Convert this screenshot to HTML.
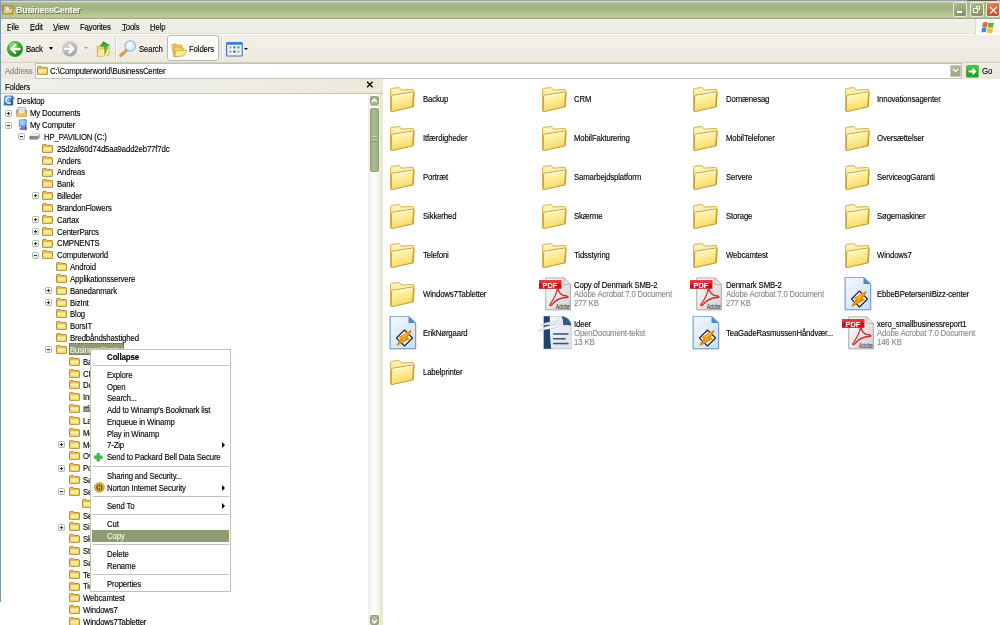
<!DOCTYPE html>
<html><head><meta charset="utf-8"><style>
*{margin:0;padding:0;box-sizing:border-box}
html,body{width:1000px;height:625px;overflow:hidden;background:#fff}
body{position:relative;font-family:"Liberation Sans",sans-serif;font-size:7.8px;letter-spacing:-0.15px;color:#000}
.a{position:absolute}
.t{position:absolute;white-space:nowrap;line-height:12px;height:12px;transform:scaleY(1.06);transform-origin:0 50%;color:#000;will-change:transform;-webkit-text-stroke-width:0.12px}
.g{color:#8a8a8a}
svg{position:absolute;overflow:visible}
#topstrip{left:0;top:0;width:1000px;height:2px;background:linear-gradient(#8aa0aa 0,#8ea2ac 45%,#d5e2ca 70%,#cfdcbf 100%)}
#title{left:0;top:2px;width:1000px;height:17px;background:linear-gradient(#bccaa0 0,#aab98a 10%,#a2b182 30%,#aab989 50%,#b6c493 70%,#bccb9a 85%,#b2bd92 93%,#9aa284 100%)}
#menubar{left:0;top:19px;width:1000px;height:16px;background:linear-gradient(#f3f2ea,#efeee5 20%,#eeede4);border-bottom:1px solid #fbfaf5;box-shadow:inset 0 -1px 0 #e2dfd2}
#toolbar{left:0;top:35px;width:1000px;height:28px;background:linear-gradient(#f1f0e8,#efede3 60%,#ebe9dc);border-bottom:1px solid #cfd3bc}
#addr{left:0;top:63px;width:1000px;height:16px;background:linear-gradient(#efede3,#ebe8da)}
#fhead{left:0;top:79px;width:383px;height:15.2px;background:linear-gradient(90deg,#f0f0ea,#efeee6 50%,#ece9da);border-bottom:1.1px solid #c9c7bc}
#tree{left:0;top:94px;width:368px;height:531px;background:#fff}
#sb{left:368px;top:94px;width:12px;height:531px;background:linear-gradient(90deg,#eeede6,#f9f9f5 30%,#fdfdfa 60%,#f1f0e8)}
#divider{left:380px;top:94px;width:3px;height:531px;background:linear-gradient(90deg,#e6e3d0,#efecdc)}
#lborder{left:0;top:0;width:1.2px;height:601.7px;background:#8196aa}
.exp{position:absolute;width:7px;height:7px;border:1px solid #b4b8aa;border-radius:1.5px;background:linear-gradient(#ffffff,#e2e0d2)}
.exp i{position:absolute;left:1px;top:2px;width:3px;height:1px;background:#2a2a2a}
.exp b{position:absolute;left:2px;top:1px;width:1px;height:3px;background:#2a2a2a}
.menu{left:90px;top:349.2px;width:141.2px;height:242.7px;background:#fff;border:1.1px solid #c3c2b8}
.sep{position:absolute;width:136px;height:1px;background:#c4c3ba}
.mt{font-size:7.8px}
</style></head><body>
<svg width="0" height="0" style="position:absolute"><defs>
<linearGradient id="fgF" x1="0" y1="0" x2="0.3" y2="1"><stop offset="0" stop-color="#fffcd2"/><stop offset="0.45" stop-color="#fdef9c"/><stop offset="1" stop-color="#f6d865"/></linearGradient>
<linearGradient id="fgB" x1="0" y1="0" x2="0" y2="1"><stop offset="0" stop-color="#fff6c4"/><stop offset="1" stop-color="#f2d26a"/></linearGradient>
<linearGradient id="grn" x1="0" y1="0" x2="0.6" y2="1"><stop offset="0" stop-color="#8fe06a"/><stop offset="0.5" stop-color="#3fb52f"/><stop offset="1" stop-color="#1a8a1a"/></linearGradient>
<linearGradient id="gry" x1="0" y1="0" x2="0.6" y2="1"><stop offset="0" stop-color="#dcdcdc"/><stop offset="1" stop-color="#a5a5a5"/></linearGradient>
<linearGradient id="pg" x1="0" y1="0" x2="1" y2="1"><stop offset="0" stop-color="#ffffff"/><stop offset="1" stop-color="#cfcfcf"/></linearGradient>
<linearGradient id="wpg" x1="0" y1="0" x2="1" y2="1"><stop offset="0" stop-color="#f4f9ff"/><stop offset="1" stop-color="#c6def7"/></linearGradient>
<symbol id="bigfolder" viewBox="0 0 35 35">
<path d="M6.4 6.4 L13.6 5.6 Q14.4 5.5 14.9 6.2 L16.2 8.1 L27.8 7.5 Q28.7 7.5 28.7 8.4 L28.4 24.8 L6.2 29.4 Q5.6 29.4 5.6 28.6 L5.6 7.3 Q5.6 6.5 6.4 6.4 Z" fill="url(#fgB)" stroke="#d1a536" stroke-width="0.9"/>
<path d="M7.4 13.3 L28.4 9.9 Q29.3 9.8 29.2 10.6 L28.3 24 Q28.2 24.7 27.5 24.8 L7 29.6 Q6.2 29.8 6.2 29 L6.7 14.1 Q6.7 13.4 7.4 13.3 Z" fill="url(#fgF)" stroke="#cfa030" stroke-width="1"/>
<path d="M7.8 14.4 L28.2 11.1" stroke="#fffff0" stroke-width="0.9" fill="none"/>
<path d="M28.5 10.6 L27.7 24.2" stroke="#c89422" stroke-width="0.9" fill="none"/>
</symbol>
<linearGradient id="sfF" x1="0" y1="0" x2="0" y2="1"><stop offset="0" stop-color="#fff8c0"/><stop offset="1" stop-color="#f8dc68"/></linearGradient>
<symbol id="smfolder" viewBox="0 0 11 9">
<path d="M1.3 0.5 H4.2 L5.2 1.5 H9.7 Q10.5 1.5 10.5 2.3 V7.9 Q10.5 8.6 9.7 8.6 H1.3 Q0.5 8.6 0.5 7.9 V1.3 Q0.5 0.5 1.3 0.5 Z" fill="#e6bd4e" stroke="#a9842c" stroke-width="0.85"/>
<rect x="1.5" y="3.5" width="8.2" height="4.3" rx="0.4" fill="url(#sfF)"/>
</symbol>
<symbol id="pdf" viewBox="0 0 35 35">
<path d="M8.7 0.9 L27 0.9 L33.4 7.5 L33.4 32.9 L8.7 32.9 Z" fill="url(#pg)" stroke="#9c9c9c" stroke-width="0.8"/>
<path d="M27 0.9 L27 7.5 L33.4 7.5 Z" fill="#e8e8e8" stroke="#9c9c9c" stroke-width="0.6"/>
<rect x="2" y="3.1" width="22.4" height="8.7" fill="#cc0c14"/>
<rect x="2" y="3.1" width="22.4" height="3.5" fill="#f05858" opacity="0.55"/>
<text x="5.6" y="10.6" font-family="Liberation Sans" font-size="8" font-weight="bold" fill="#fff" textLength="14.5" lengthAdjust="spacingAndGlyphs">PDF</text>
<path d="M20.5 11.5 C19.8 15.5 17.5 21 13 27.5 C12.2 28.8 14 29 15 27.6 C18 23.5 22.5 20.8 29.8 20.5 C31.5 20.4 31.4 19.3 29.3 19 C24 18.5 21.8 16.3 21 11.8" fill="none" stroke="#d32a2a" stroke-width="1.3"/>
<text x="18.8" y="32.3" font-family="Liberation Sans" font-size="6.8" fill="#2e2e2e" textLength="14" lengthAdjust="spacingAndGlyphs">Adobe</text>
</symbol>
<symbol id="wa" viewBox="0 0 35 35">
<path d="M5.1 0.2 L23.5 0.2 L30.7 7 L30.7 32.8 L5.1 32.8 Z" fill="url(#wpg)" stroke="#5d8ec6" stroke-width="1"/>
<path d="M23.5 0.2 L23.5 7 L30.7 7 Z" fill="#4a8ad8"/>
<path d="M11.5 22 L19.5 14 L27.5 22 L19.5 30 Z" fill="#fff" stroke="#222" stroke-width="1.1" stroke-linejoin="round"/>
<path d="M12.4 28.8 L17.2 21.6 L14.6 21.4 L25.8 15 L21.2 22.2 L24 22.5 Z" fill="#f4a21c" stroke="#e08a10" stroke-width="1.6" stroke-linejoin="round"/><path d="M15.5 21.8 L23.5 17" stroke="#fcd070" stroke-width="0.8"/>
</symbol>
<symbol id="odt" viewBox="0 0 35 35">
<linearGradient id="odpg" x1="0" y1="0" x2="1" y2="1"><stop offset="0" stop-color="#f6f7f9"/><stop offset="1" stop-color="#dde2e8"/></linearGradient>
<path d="M6.8 0.2 L24.5 0.2 Q33 1 34.3 9.5 L34.3 32.8 L6.8 32.8 Z" fill="url(#odpg)" stroke="#a8b0ba" stroke-width="0.6"/>
<path d="M6.8 0.2 L12.8 0.2 Q12.6 20 14.2 32.8 L6.8 32.8 Z" fill="#1f4470"/>
<path d="M24.5 0.2 Q33 1 34.3 9.5 Q30 8.6 26.2 9.2 Q26.6 4 24.5 0.2 Z" fill="#2f5b8c"/>
<path d="M1.5 15 Q8 9.5 16 9.2 Q21 9 24.8 5.5 Q22 12 15 12.5 Q8 13 1.5 15 Z" fill="#f4f6f8" stroke="#b8c2cc" stroke-width="0.5"/>
<path d="M3.5 9.5 Q9 5.5 15 6 Q19 6.2 22 3.5 Q20 8 14.5 8.5 Q9 8.8 3.5 9.5 Z" fill="#eef1f4" stroke="#b8c2cc" stroke-width="0.5"/>
<rect x="16.1" y="17.2" width="15.4" height="1.5" fill="#2e5580"/>
<rect x="16.1" y="22" width="12.4" height="1.5" fill="#2e5580"/>
<rect x="16.1" y="26.8" width="15.4" height="1.5" fill="#2e5580"/>
</symbol>
</defs></svg>
<div class="a" id="topstrip"></div><div class="a" id="title"></div><div class="a" id="menubar"></div><div class="a" id="toolbar"></div><div class="a" id="addr"></div>
<div class="a" id="fhead"></div><div class="a" id="tree"></div><div class="a" id="sb"></div><div class="a" id="divider"></div>
<div class="a" style="left:967px;top:0;width:30px;height:0.9px;background:#6b5a50"></div>
<svg style="left:2px;top:4px" width="12" height="11" viewBox="0 0 12 11">
<path d="M0.8 2 L4.5 1.2 L5.6 2.3 L10.5 2.2 L10.5 9.8 L1 9.8 Z" fill="#e7b840" stroke="#9b7420" stroke-width="0.8"/>
<path d="M1.5 4.5 L11.2 4.2 L10.3 9.6 L1.2 9.8 Z" fill="#f6d36a" stroke="#a37a22" stroke-width="0.7"/>
<circle cx="5.2" cy="5" r="2.4" fill="#cfeaff" stroke="#7fb0d8" stroke-width="0.5"/>
</svg>
<div class="t" style="left:16px;top:3.5px;font-weight:bold;font-size:9px;letter-spacing:-0.3px;color:#f5f6ec;text-shadow:1px 1px 0 #5d6b44;line-height:12px">BusinessCenter</div>
<div class="a" style="left:953.4px;top:2.4px;width:14px;height:14.4px;border-radius:2.5px;border:0.9px solid #e8eedc;background:linear-gradient(160deg,#b2bf96,#98a77c 45%,#7f8f64)"><div class="a" style="left:2.8px;top:7.8px;width:5px;height:1.9px;background:#fff"></div></div>
<div class="a" style="left:969.5px;top:2.4px;width:14px;height:14.4px;border-radius:2.5px;border:0.9px solid #e8eedc;background:linear-gradient(160deg,#b2bf96,#98a77c 45%,#7f8f64)"><div class="a" style="left:5px;top:2.2px;width:4.6px;height:4.6px;border:0.9px solid #f4f4ea;border-top-width:1.4px"></div><div class="a" style="left:2.7px;top:4.6px;width:5px;height:4.8px;border:0.9px solid #fff;border-top-width:1.4px;background:#8e9d74"></div></div>
<div class="a" style="left:985.8px;top:2.4px;width:14px;height:14.4px;border-radius:2.5px;border:0.9px solid #e8eedc;background:linear-gradient(160deg,#e88a64,#d4643a 45%,#bf4c24)"><svg style="left:2.4px;top:2.6px" width="9" height="9" viewBox="0 0 9 9"><path d="M1 1 L7.8 7.6 M7.8 1 L1 7.6" stroke="#fff" stroke-width="1.3"/></svg></div>
<div class="t " style="left:7.2px;top:21.5px;">File</div>
<div class="a" style="left:7.2px;top:30.3px;width:4px;height:0.8px;background:#555"></div>
<div class="t " style="left:29.7px;top:21.5px;">Edit</div>
<div class="a" style="left:29.7px;top:30.3px;width:4px;height:0.8px;background:#555"></div>
<div class="t " style="left:53.0px;top:21.5px;">View</div>
<div class="a" style="left:53.0px;top:30.3px;width:4px;height:0.8px;background:#555"></div>
<div class="t " style="left:79.6px;top:21.5px;">Favorites</div>
<div class="a" style="left:86.6px;top:30.3px;width:4px;height:0.8px;background:#555"></div>
<div class="t " style="left:122.0px;top:21.5px;">Tools</div>
<div class="a" style="left:122.0px;top:30.3px;width:4px;height:0.8px;background:#555"></div>
<div class="t " style="left:150.3px;top:21.5px;">Help</div>
<div class="a" style="left:150.3px;top:30.3px;width:4px;height:0.8px;background:#555"></div>
<div class="a" style="left:974.5px;top:19px;width:25.5px;height:16px;background:#fff;border-left:1px solid #dcd9c8"></div>
<svg style="left:981px;top:20.5px" width="14" height="13" viewBox="0 0 14 13">
<path d="M2 1.8 Q4 0.6 6.6 1.4 L5.8 6 Q3.4 5.2 1.2 6.3 Z" fill="#e8602a"/>
<path d="M7.3 1.6 Q10 2.6 13 1.4 L12.2 6.3 Q9.4 7.3 6.6 6.2 Z" fill="#5cb832"/>
<path d="M1.1 7 Q3.3 5.9 5.7 6.7 L4.9 11.3 Q2.6 10.5 0.3 11.6 Z" fill="#3a8ee0"/>
<path d="M6.5 6.9 Q9.3 8 12.1 7 L11.3 11.8 Q8.5 12.8 5.7 11.6 Z" fill="#f4c020"/>
</svg>
<svg style="left:7px;top:41px" width="16" height="16" viewBox="0 0 16 16">
<circle cx="8" cy="8" r="7.8" fill="url(#grn)"/>
<circle cx="8" cy="8" r="7.5" fill="none" stroke="#24922a" stroke-width="0.6"/><ellipse cx="6.5" cy="4.5" rx="4.5" ry="3" fill="#b8f0a0" opacity="0.35"/>
<path d="M12.6 8 L4.6 8 M8.2 4.2 L4.2 8 L8.2 11.8" stroke="#fff" stroke-width="2.3" fill="none" stroke-linecap="round" stroke-linejoin="round"/>
</svg>
<div class="t " style="left:25.8px;top:44.0px;">Back</div>
<div class="a" style="left:48.5px;top:47.2px;width:0;height:0;border-top:3px solid #000;border-left:2px solid transparent;border-right:2px solid transparent"></div>
<svg style="left:62px;top:41.1px" width="16" height="16" viewBox="0 0 16 16">
<circle cx="7.7" cy="7.8" r="7.7" fill="url(#gry)"/>
<path d="M3 7.8 L11 7.8 M7.4 4 L11.4 7.8 L7.4 11.6" stroke="#fff" stroke-width="2.3" fill="none" stroke-linecap="round" stroke-linejoin="round"/>
</svg>
<div class="a" style="left:84.2px;top:47.1px;width:0;height:0;border-top:2px solid #999;border-left:2px solid transparent;border-right:2px solid transparent"></div>
<svg style="left:95.5px;top:40.5px" width="15" height="17" viewBox="0 0 15 17">
<linearGradient id="upg" x1="0" y1="0" x2="0.3" y2="1"><stop offset="0" stop-color="#1a9020"/><stop offset="1" stop-color="#7ad85a"/></linearGradient>
<path d="M1 5.6 L4.4 4.4 L6 5.5 L12.4 5.4 Q13.8 5.4 13.7 6.8 L13 13.8 L1.5 16 Z" fill="#f1d16a" stroke="#cfa640" stroke-width="0.7"/>
<path d="M2.3 8.2 L13.9 7.4 L12.2 14.3 L1.6 16.1 Z" fill="#fdec98" stroke="#d7b04a" stroke-width="0.5"/>
<path d="M7.4 0.6 L13.5 4.3 L10.9 4.7 C11.3 8 10.6 11.2 8.5 13.4 C9 10.6 8.8 7.6 8 5 L4.3 5.2 Z" fill="url(#upg)" stroke="#148018" stroke-width="0.4"/>
</svg>
<div class="a" style="left:114.5px;top:37px;width:1px;height:23.5px;background:#d3d0c0;box-shadow:1px 0 0 #fff"></div>
<svg style="left:119px;top:40px" width="18" height="17" viewBox="0 0 18 17">
<path d="M7.5 10.2 L1.8 15.6" stroke="#c0702a" stroke-width="2.8" stroke-linecap="round"/>
<path d="M7.5 10.2 L1.8 15.6" stroke="#f5a65a" stroke-width="1.4" stroke-linecap="round"/>
<circle cx="11.2" cy="6" r="5.2" fill="#d8f0ff" stroke="#8cb4d4" stroke-width="1.1"/>
<circle cx="10.3" cy="5" r="2.4" fill="#f4fbff"/>
</svg>
<div class="t " style="left:138.9px;top:44.0px;">Search</div>
<div class="a" style="left:167.4px;top:35.4px;width:51.3px;height:26.1px;background:#fbfbf9;border:1px solid #b3bac4;border-radius:3px"></div>
<svg style="left:170.5px;top:42px" width="17" height="16" viewBox="0 0 17 16">
<path d="M1 2.5 L5 1.8 L6.2 3 L11 3.2 L11.5 12 L2.5 14.8 Z" fill="#eec552" stroke="#c69a30" stroke-width="0.6"/>
<path d="M3 5.5 L7 4.8 L8 5.8 L12.5 6 L13 13 L4 15 Z" fill="#f5d568" stroke="#c69a30" stroke-width="0.6"/>
<path d="M4.5 9 L16 8 L13.2 13.8 L4 15 Z" fill="#fbeb92" stroke="#c49a2e" stroke-width="0.6"/>
</svg>
<div class="t " style="left:189.4px;top:44.0px;">Folders</div>
<div class="a" style="left:220.5px;top:37px;width:1px;height:23.5px;background:#d3d0c0;box-shadow:1px 0 0 #fff"></div>
<svg style="left:225.5px;top:42px" width="17" height="15" viewBox="0 0 17 15">
<rect x="0.6" y="0.6" width="15.6" height="13.4" rx="1" fill="#eef5ff" stroke="#3d6fc8" stroke-width="1.1"/>
<rect x="0.6" y="0.6" width="15.6" height="2.2" fill="#4a7fd8"/>
<rect x="3.4" y="4.4" width="2" height="2" fill="#a898d0"/><rect x="7.4" y="4.4" width="2" height="2" fill="#2a6ad8"/><rect x="11.4" y="4.4" width="2" height="2" fill="#20a030"/>
<rect x="3.4" y="8.6" width="2" height="2" fill="#e87850"/><rect x="7.4" y="8.6" width="2" height="2" fill="#183a8a"/><rect x="11.4" y="8.6" width="2" height="2" fill="#c8a040"/>
</svg>
<div class="a" style="left:244.3px;top:48px;width:0;height:0;border-top:2.5px solid #000;border-left:2px solid transparent;border-right:2px solid transparent"></div>
<div class="t " style="left:4.9px;top:65.8px;color:#8c8a80">Address</div>
<div class="a" style="left:35px;top:63px;width:927px;height:16px;background:#fff;border:1px solid #bcc6aa"></div>
<svg style="left:36.8px;top:66px" width="11" height="9"><use href="#smfolder"/></svg>
<div class="t " style="left:50.0px;top:65.8px;">C:\Computerworld\BusinessCenter</div>
<div class="a" style="left:950px;top:64.8px;width:10.5px;height:12.4px;background:linear-gradient(#b0bb98,#98a582);border:1px solid #c7cdb8"></div>
<svg style="left:952px;top:68px" width="7" height="5" viewBox="0 0 7 5"><path d="M1 1 L3.5 3.6 L6 1" stroke="#fff" stroke-width="1.3" fill="none"/></svg>
<svg style="left:966px;top:64.8px" width="13" height="13" viewBox="0 0 13 13">
<rect x="0.2" y="0.2" width="12.4" height="12.4" rx="1.5" fill="#22a22a"/>
<rect x="0.2" y="0.2" width="12.4" height="5" rx="1.5" fill="#5ccc52" opacity="0.6"/>
<path d="M2.5 5.4 L6.5 5.4 L6.5 2.6 L10.6 6.4 L6.5 10.2 L6.5 7.4 L2.5 7.4 Z" fill="#fff"/>
</svg>
<div class="t " style="left:981.6px;top:66.0px;">Go</div>
<div class="t " style="left:4.8px;top:82.0px;">Folders</div>
<svg style="left:366.3px;top:80.6px" width="8" height="7" viewBox="0 0 8 7"><path d="M1 0.8 L6.6 6.2 M6.6 0.8 L1 6.2" stroke="#000" stroke-width="1.3"/></svg>
<svg style="left:2.5px;top:95.3px" width="12" height="11" viewBox="0 0 12 11">
<linearGradient id="dkg" x1="0" y1="0" x2="1" y2="1"><stop offset="0" stop-color="#6fb0f0"/><stop offset="0.5" stop-color="#3a7cd0"/><stop offset="1" stop-color="#1c4c9c"/></linearGradient>
<path d="M1.2 1.4 Q1.2 0.4 2.2 0.4 L9.4 0.6 Q10.3 0.6 10.3 1.6 L10.2 9.2 Q10.2 10.4 9 10.4 L1.8 10.6 Q0.6 10.6 0.6 9.4 Z" fill="url(#dkg)"/>
<path d="M8 3 C6.5 1.6 3.2 2 3 5.2 C2.9 8.2 6 8.8 7.8 7.6" fill="none" stroke="#e8f4ff" stroke-width="1.6"/>
<circle cx="5.6" cy="5.4" r="1.3" fill="#8cc4f4"/>
<circle cx="10.8" cy="3.2" r="0.9" fill="#d84830"/>
</svg>
<div class="t " style="left:16.6px;top:96.4px;">Desktop</div>
<div class="exp" style="left:4.7px;top:109.6px"><i></i><b></b></div>
<svg style="left:16px;top:107.2px" width="11" height="10" viewBox="0 0 11 10">
<rect x="0.4" y="2.6" width="10.2" height="7" rx="1" fill="#d9a840" stroke="#a98030" stroke-width="0.6"/>
<rect x="2.2" y="0.4" width="6.8" height="7" fill="#eef6ff" stroke="#6c9ed4" stroke-width="0.6"/>
<rect x="3.2" y="2.2" width="4.8" height="0.6" fill="#9cc0e8"/><rect x="3.2" y="3.8" width="4.8" height="0.6" fill="#9cc0e8"/>
<rect x="0.6" y="5.8" width="9.8" height="3.6" fill="#f2c45a"/>
</svg>
<div class="t " style="left:30.0px;top:108.2px;">My Documents</div>
<div class="exp" style="left:4.7px;top:121.5px"><i></i></div>
<svg style="left:17.5px;top:119px" width="10" height="12" viewBox="0 0 10 12">
<linearGradient id="cmg" x1="0" y1="0" x2="1" y2="1"><stop offset="0" stop-color="#9ad4ff"/><stop offset="1" stop-color="#2a78d8"/></linearGradient>
<path d="M1.6 1 L7.6 0.4 Q8.4 0.4 8.4 1.2 L8.2 7 L2 7.8 Q1.2 7.8 1.2 7 L1.2 1.6 Q1.2 1 1.6 1 Z" fill="url(#cmg)" stroke="#2f68b8" stroke-width="0.5"/>
<path d="M2.2 1.8 L7.4 1.3 L7.3 6.2 L2.2 6.8 Z" fill="#bfe6ff" opacity="0.6"/>
<path d="M2.2 10.8 Q1.4 9.6 3 8.6 L7.6 8 Q8.8 9 7.6 10.6 Z" fill="#7a6cc8" stroke="#4a3c98" stroke-width="0.4"/>
<path d="M6.6 7.4 L8.8 7.2 L8.8 11 L6.8 11.2 Z" fill="#5a58b8"/>
</svg>
<div class="t " style="left:30.0px;top:120.1px;">My Computer</div>
<div class="exp" style="left:18.2px;top:133.3px"><i></i></div>
<svg style="left:29px;top:132.8px" width="12" height="7" viewBox="0 0 12 7">
<path d="M0.5 3 L3 0.6 L11.3 0.6 L11.3 4 L8.8 6.4 L0.5 6.4 Z" fill="#a8a8a8"/>
<path d="M0.5 3 L3 0.6 L11.3 0.6 L8.8 3 Z" fill="#eeeeee"/>
<path d="M0.5 3 L8.8 3 L8.8 6.4 L0.5 6.4 Z" fill="#8a8a8a"/>
<rect x="6.4" y="4.2" width="1.6" height="0.9" fill="#50d040"/>
</svg>
<div class="t " style="left:43.5px;top:131.9px;">HP_PAVILION (C:)</div>
<svg style="left:42.4px;top:143.8px" width="11" height="9"><use href="#smfolder"/></svg>
<div class="t " style="left:56.8px;top:143.7px;">25d2af60d74d5aa9add2eb77f7dc</div>
<svg style="left:42.4px;top:155.7px" width="11" height="9"><use href="#smfolder"/></svg>
<div class="t " style="left:56.8px;top:155.6px;">Anders</div>
<svg style="left:42.4px;top:167.5px" width="11" height="9"><use href="#smfolder"/></svg>
<div class="t " style="left:56.8px;top:167.4px;">Andreas</div>
<svg style="left:42.4px;top:179.3px" width="11" height="9"><use href="#smfolder"/></svg>
<div class="t " style="left:56.8px;top:179.2px;">Bank</div>
<div class="exp" style="left:31.5px;top:192.4px"><i></i><b></b></div>
<svg style="left:42.4px;top:191.1px" width="11" height="9"><use href="#smfolder"/></svg>
<div class="t " style="left:56.8px;top:191.0px;">Billeder</div>
<svg style="left:42.4px;top:203.0px" width="11" height="9"><use href="#smfolder"/></svg>
<div class="t " style="left:56.8px;top:202.9px;">BrandonFlowers</div>
<div class="exp" style="left:31.5px;top:216.1px"><i></i><b></b></div>
<svg style="left:42.4px;top:214.8px" width="11" height="9"><use href="#smfolder"/></svg>
<div class="t " style="left:56.8px;top:214.7px;">Cartax</div>
<div class="exp" style="left:31.5px;top:227.9px"><i></i><b></b></div>
<svg style="left:42.4px;top:226.6px" width="11" height="9"><use href="#smfolder"/></svg>
<div class="t " style="left:56.8px;top:226.5px;">CenterParcs</div>
<div class="exp" style="left:31.5px;top:239.8px"><i></i><b></b></div>
<svg style="left:42.4px;top:238.5px" width="11" height="9"><use href="#smfolder"/></svg>
<div class="t " style="left:56.8px;top:238.4px;">CMPNENTS</div>
<div class="exp" style="left:31.5px;top:251.6px"><i></i></div>
<svg style="left:42.4px;top:250.3px" width="11" height="9"><use href="#smfolder"/></svg>
<div class="t " style="left:56.8px;top:250.2px;">Computerworld</div>
<svg style="left:55.6px;top:262.1px" width="11" height="9"><use href="#smfolder"/></svg>
<div class="t " style="left:70.0px;top:262.0px;">Android</div>
<svg style="left:55.6px;top:274.0px" width="11" height="9"><use href="#smfolder"/></svg>
<div class="t " style="left:70.0px;top:273.9px;">Applikationsservere</div>
<div class="exp" style="left:44.7px;top:287.1px"><i></i><b></b></div>
<svg style="left:55.6px;top:285.8px" width="11" height="9"><use href="#smfolder"/></svg>
<div class="t " style="left:70.0px;top:285.7px;">Banedanmark</div>
<div class="exp" style="left:44.7px;top:298.9px"><i></i><b></b></div>
<svg style="left:55.6px;top:297.6px" width="11" height="9"><use href="#smfolder"/></svg>
<div class="t " style="left:70.0px;top:297.5px;">BizInt</div>
<svg style="left:55.6px;top:309.4px" width="11" height="9"><use href="#smfolder"/></svg>
<div class="t " style="left:70.0px;top:309.3px;">Blog</div>
<svg style="left:55.6px;top:321.3px" width="11" height="9"><use href="#smfolder"/></svg>
<div class="t " style="left:70.0px;top:321.2px;">BorsIT</div>
<svg style="left:55.6px;top:333.1px" width="11" height="9"><use href="#smfolder"/></svg>
<div class="t " style="left:70.0px;top:333.0px;">Bredbåndshastighed</div>
<div class="exp" style="left:44.7px;top:346.2px"><i></i></div>
<svg style="left:55.6px;top:344.9px" width="11" height="9"><use href="#smfolder"/></svg>
<div class="a" style="left:68.7px;top:343.4px;width:55.7px;height:11.6px;background:#8f9c73;border:1px dotted #5f6a48"></div>
<div class="t " style="left:70.0px;top:344.8px;color:#eef0e4">BusinessCenter</div>
<svg style="left:68.6px;top:356.8px" width="11" height="9"><use href="#smfolder"/></svg>
<div class="t " style="left:83.0px;top:356.7px;">Backup</div>
<svg style="left:68.6px;top:368.6px" width="11" height="9"><use href="#smfolder"/></svg>
<div class="t " style="left:83.0px;top:368.5px;">CRM</div>
<svg style="left:68.6px;top:380.4px" width="11" height="9"><use href="#smfolder"/></svg>
<div class="t " style="left:83.0px;top:380.3px;">Domænesag</div>
<svg style="left:68.6px;top:392.2px" width="11" height="9"><use href="#smfolder"/></svg>
<div class="t " style="left:83.0px;top:392.1px;">Innovationsagenter</div>
<svg style="left:68.6px;top:404.1px" width="11" height="9"><use href="#smfolder"/></svg>
<div class="t " style="left:83.0px;top:404.0px;">Itfærdigheder</div>
<svg style="left:68.6px;top:415.9px" width="11" height="9"><use href="#smfolder"/></svg>
<div class="t " style="left:83.0px;top:415.8px;">Labelprinter</div>
<svg style="left:68.6px;top:427.7px" width="11" height="9"><use href="#smfolder"/></svg>
<div class="t " style="left:83.0px;top:427.6px;">MobilFakturering</div>
<div class="exp" style="left:57.7px;top:440.9px"><i></i><b></b></div>
<svg style="left:68.6px;top:439.6px" width="11" height="9"><use href="#smfolder"/></svg>
<div class="t " style="left:83.0px;top:439.5px;">MobilTelefoner</div>
<svg style="left:68.6px;top:451.4px" width="11" height="9"><use href="#smfolder"/></svg>
<div class="t " style="left:83.0px;top:451.3px;">Oversættelser</div>
<div class="exp" style="left:57.7px;top:464.5px"><i></i><b></b></div>
<svg style="left:68.6px;top:463.2px" width="11" height="9"><use href="#smfolder"/></svg>
<div class="t " style="left:83.0px;top:463.1px;">Portræt</div>
<svg style="left:68.6px;top:475.1px" width="11" height="9"><use href="#smfolder"/></svg>
<div class="t " style="left:83.0px;top:475.0px;">Samarbejdsplatform</div>
<div class="exp" style="left:57.7px;top:488.2px"><i></i></div>
<svg style="left:68.6px;top:486.9px" width="11" height="9"><use href="#smfolder"/></svg>
<div class="t " style="left:83.0px;top:486.8px;">Servere</div>
<svg style="left:82.0px;top:498.7px" width="11" height="9"><use href="#smfolder"/></svg>
<svg style="left:68.6px;top:510.6px" width="11" height="9"><use href="#smfolder"/></svg>
<div class="t " style="left:83.0px;top:510.5px;">ServiceogGaranti</div>
<div class="exp" style="left:57.7px;top:523.7px"><i></i><b></b></div>
<svg style="left:68.6px;top:522.4px" width="11" height="9"><use href="#smfolder"/></svg>
<div class="t " style="left:83.0px;top:522.3px;">Sikkerhed</div>
<svg style="left:68.6px;top:534.2px" width="11" height="9"><use href="#smfolder"/></svg>
<div class="t " style="left:83.0px;top:534.1px;">Skærme</div>
<svg style="left:68.6px;top:546.0px" width="11" height="9"><use href="#smfolder"/></svg>
<div class="t " style="left:83.0px;top:545.9px;">Storage</div>
<svg style="left:68.6px;top:557.9px" width="11" height="9"><use href="#smfolder"/></svg>
<div class="t " style="left:83.0px;top:557.8px;">Søgemaskiner</div>
<svg style="left:68.6px;top:569.7px" width="11" height="9"><use href="#smfolder"/></svg>
<div class="t " style="left:83.0px;top:569.6px;">Telefoni</div>
<svg style="left:68.6px;top:581.5px" width="11" height="9"><use href="#smfolder"/></svg>
<div class="t " style="left:83.0px;top:581.4px;">Tidsstyring</div>
<svg style="left:68.6px;top:593.4px" width="11" height="9"><use href="#smfolder"/></svg>
<div class="t " style="left:83.0px;top:593.3px;">Webcamtest</div>
<svg style="left:68.6px;top:605.2px" width="11" height="9"><use href="#smfolder"/></svg>
<div class="t " style="left:83.0px;top:605.1px;">Windows7</div>
<svg style="left:68.6px;top:617.0px" width="11" height="9"><use href="#smfolder"/></svg>
<div class="t " style="left:83.0px;top:616.9px;">Windows7Tabletter</div>
<div class="a" style="left:369.9px;top:96.1px;width:8.8px;height:8.8px;border-radius:1.5px;background:linear-gradient(90deg,#98a982,#aebd98 35%,#a9b893 65%,#98a982);border:0.8px solid #93a27c"></div>
<div class="a" style="left:369.9px;top:104.9px;width:8.8px;height:1.5px;background:#c2cdb2"></div>
<svg style="left:371px;top:98.2px" width="7" height="5" viewBox="0 0 7 5"><path d="M0.9 3.9 L3.4 1.3 L5.9 3.9" stroke="#fff" stroke-width="1.5" fill="none"/></svg>
<div class="a" style="left:369.9px;top:108px;width:8.8px;height:63.5px;border-radius:1.5px;background:linear-gradient(90deg,#98a982,#aebd98 35%,#a9b893 65%,#98a982);border:0.8px solid #93a27c"></div>
<div class="a" style="left:372px;top:136.2px;width:4.6px;height:0.8px;background:#cfd8c0;box-shadow:0 1.6px 0 #8a9a74,0 3.2px 0 #cfd8c0,0 4.8px 0 #8a9a74"></div>
<div class="a" style="left:369.9px;top:615px;width:8.8px;height:10px;border-radius:1.5px;background:linear-gradient(90deg,#98a982,#aebd98 35%,#a9b893 65%,#98a982);border:0.8px solid #93a27c"></div>
<svg style="left:371px;top:618.6px" width="7" height="5" viewBox="0 0 7 5"><path d="M0.9 1.1 L3.4 3.7 L5.9 1.1" stroke="#fff" stroke-width="1.5" fill="none"/></svg>
<svg style="left:385px;top:82px" width="35" height="35"><use href="#bigfolder"/></svg>
<div class="t " style="left:422.6px;top:93.6px;">Backup</div>
<svg style="left:536.5px;top:82px" width="35" height="35"><use href="#bigfolder"/></svg>
<div class="t " style="left:574.1px;top:93.6px;">CRM</div>
<svg style="left:688px;top:82px" width="35" height="35"><use href="#bigfolder"/></svg>
<div class="t " style="left:725.6px;top:93.6px;">Domænesag</div>
<svg style="left:839.5px;top:82px" width="35" height="35"><use href="#bigfolder"/></svg>
<div class="t " style="left:877.1px;top:93.6px;">Innovationsagenter</div>
<svg style="left:385px;top:121px" width="35" height="35"><use href="#bigfolder"/></svg>
<div class="t " style="left:422.6px;top:132.6px;">Itfærdigheder</div>
<svg style="left:536.5px;top:121px" width="35" height="35"><use href="#bigfolder"/></svg>
<div class="t " style="left:574.1px;top:132.6px;">MobilFakturering</div>
<svg style="left:688px;top:121px" width="35" height="35"><use href="#bigfolder"/></svg>
<div class="t " style="left:725.6px;top:132.6px;">MobilTelefoner</div>
<svg style="left:839.5px;top:121px" width="35" height="35"><use href="#bigfolder"/></svg>
<div class="t " style="left:877.1px;top:132.6px;">Oversættelser</div>
<svg style="left:385px;top:160px" width="35" height="35"><use href="#bigfolder"/></svg>
<div class="t " style="left:422.6px;top:171.6px;">Portræt</div>
<svg style="left:536.5px;top:160px" width="35" height="35"><use href="#bigfolder"/></svg>
<div class="t " style="left:574.1px;top:171.6px;">Samarbejdsplatform</div>
<svg style="left:688px;top:160px" width="35" height="35"><use href="#bigfolder"/></svg>
<div class="t " style="left:725.6px;top:171.6px;">Servere</div>
<svg style="left:839.5px;top:160px" width="35" height="35"><use href="#bigfolder"/></svg>
<div class="t " style="left:877.1px;top:171.6px;">ServiceogGaranti</div>
<svg style="left:385px;top:199px" width="35" height="35"><use href="#bigfolder"/></svg>
<div class="t " style="left:422.6px;top:210.6px;">Sikkerhed</div>
<svg style="left:536.5px;top:199px" width="35" height="35"><use href="#bigfolder"/></svg>
<div class="t " style="left:574.1px;top:210.6px;">Skærme</div>
<svg style="left:688px;top:199px" width="35" height="35"><use href="#bigfolder"/></svg>
<div class="t " style="left:725.6px;top:210.6px;">Storage</div>
<svg style="left:839.5px;top:199px" width="35" height="35"><use href="#bigfolder"/></svg>
<div class="t " style="left:877.1px;top:210.6px;">Søgemaskiner</div>
<svg style="left:385px;top:238px" width="35" height="35"><use href="#bigfolder"/></svg>
<div class="t " style="left:422.6px;top:249.6px;">Telefoni</div>
<svg style="left:536.5px;top:238px" width="35" height="35"><use href="#bigfolder"/></svg>
<div class="t " style="left:574.1px;top:249.6px;">Tidsstyring</div>
<svg style="left:688px;top:238px" width="35" height="35"><use href="#bigfolder"/></svg>
<div class="t " style="left:725.6px;top:249.6px;">Webcamtest</div>
<svg style="left:839.5px;top:238px" width="35" height="35"><use href="#bigfolder"/></svg>
<div class="t " style="left:877.1px;top:249.6px;">Windows7</div>
<svg style="left:385px;top:277px" width="35" height="35"><use href="#bigfolder"/></svg>
<div class="t " style="left:422.6px;top:288.6px;">Windows7Tabletter</div>
<svg style="left:536.5px;top:277px" width="35" height="35"><use href="#pdf"/></svg>
<div class="t " style="left:574.1px;top:279.6px;">Copy of Denmark SMB-2</div>
<div class="t g" style="left:574.1px;top:288.6px;">Adobe Acrobat 7.0 Document</div>
<div class="t g" style="left:574.1px;top:297.6px;">277 KB</div>
<svg style="left:688px;top:277px" width="35" height="35"><use href="#pdf"/></svg>
<div class="t " style="left:725.6px;top:279.6px;">Denmark SMB-2</div>
<div class="t g" style="left:725.6px;top:288.6px;">Adobe Acrobat 7.0 Document</div>
<div class="t g" style="left:725.6px;top:297.6px;">277 KB</div>
<svg style="left:839.5px;top:277px" width="35" height="35"><use href="#wa"/></svg>
<div class="t " style="left:877.1px;top:288.6px;">EbbeBPetersenIBizz-center</div>
<svg style="left:385px;top:316px" width="35" height="35"><use href="#wa"/></svg>
<div class="t " style="left:422.6px;top:327.6px;">ErikNørgaard</div>
<svg style="left:536.5px;top:316px" width="35" height="35"><use href="#odt"/></svg>
<div class="t " style="left:574.1px;top:318.6px;">Ideer</div>
<div class="t g" style="left:574.1px;top:327.6px;">OpenDocument-tekst</div>
<div class="t g" style="left:574.1px;top:336.6px;">13 KB</div>
<svg style="left:688px;top:316px" width="35" height="35"><use href="#wa"/></svg>
<div class="t " style="left:725.6px;top:327.6px;">TeaGadeRasmussenHåndvær...</div>
<svg style="left:839.5px;top:316px" width="35" height="35"><use href="#pdf"/></svg>
<div class="t " style="left:877.1px;top:318.6px;">xero_smallbusinessreport1</div>
<div class="t g" style="left:877.1px;top:327.6px;">Adobe Acrobat 7.0 Document</div>
<div class="t g" style="left:877.1px;top:336.6px;">146 KB</div>
<svg style="left:385px;top:355px" width="35" height="35"><use href="#bigfolder"/></svg>
<div class="t " style="left:422.6px;top:366.6px;">Labelprinter</div>
<div class="a menu"></div>
<div class="t " style="left:106.8px;top:352.0px;font-weight:bold;font-size:8px">Collapse</div>
<div class="sep" style="left:93px;top:365.2px"></div>
<div class="t " style="left:106.8px;top:370.0px;">Explore</div>
<div class="t " style="left:106.8px;top:381.7px;">Open</div>
<div class="t " style="left:106.8px;top:393.4px;">Search...</div>
<div class="t " style="left:106.8px;top:405.1px;">Add to Winamp&#x27;s Bookmark list</div>
<div class="t " style="left:106.8px;top:416.8px;">Enqueue in Winamp</div>
<div class="t " style="left:106.8px;top:428.5px;">Play in Winamp</div>
<div class="t " style="left:106.8px;top:440.2px;">7-Zip</div>
<div class="a" style="left:221.5px;top:442.4px;width:0;height:0;border-left:3px solid #000;border-top:3px solid transparent;border-bottom:3px solid transparent"></div>
<div class="t " style="left:106.8px;top:451.9px;">Send to Packard Bell Data Secure</div>
<svg style="left:94px;top:453px" width="8.5" height="8.5" viewBox="0 0 8 8"><path d="M2.7 0.3 H5.3 V2.7 H7.7 V5.3 H5.3 V7.7 H2.7 V5.3 H0.3 V2.7 H2.7 Z" fill="#3cc03c" stroke="#2a9a2a" stroke-width="0.4"/></svg>
<div class="sep" style="left:93px;top:465.8px"></div>
<div class="t " style="left:106.8px;top:470.7px;">Sharing and Security...</div>
<div class="t " style="left:106.8px;top:482.6px;">Norton Internet Security</div>
<div class="a" style="left:221.5px;top:484.8px;width:0;height:0;border-left:3px solid #000;border-top:3px solid transparent;border-bottom:3px solid transparent"></div>
<svg style="left:94px;top:482.4px" width="11" height="11" viewBox="0 0 11 11"><circle cx="5.4" cy="5.4" r="5" fill="#e8b838" stroke="#c08a18" stroke-width="0.6"/><circle cx="5.4" cy="5.4" r="3.2" fill="#6a5020"/><path d="M4.2 2.8 V8 M6.6 2.8 V8 M4.2 5.4 H6.6" stroke="#e8c860" stroke-width="0.9"/></svg>
<div class="sep" style="left:93px;top:496.1px"></div>
<div class="t " style="left:106.8px;top:500.9px;">Send To</div>
<div class="a" style="left:221.5px;top:503.1px;width:0;height:0;border-left:3px solid #000;border-top:3px solid transparent;border-bottom:3px solid transparent"></div>
<div class="sep" style="left:93px;top:514.2px"></div>
<div class="t " style="left:106.8px;top:519.2px;">Cut</div>
<div class="a" style="left:92.4px;top:530.4px;width:136.6px;height:11.2px;background:#8f9c73"></div>
<div class="t " style="left:106.8px;top:531.0px;color:#f4f5ee">Copy</div>
<div class="sep" style="left:93px;top:544.2px"></div>
<div class="t " style="left:106.8px;top:549.0px;">Delete</div>
<div class="t " style="left:106.8px;top:560.7px;">Rename</div>
<div class="sep" style="left:93px;top:574.4px"></div>
<div class="t " style="left:106.8px;top:578.8px;">Properties</div>
<div class="a" id="lborder"></div>
</body></html>
